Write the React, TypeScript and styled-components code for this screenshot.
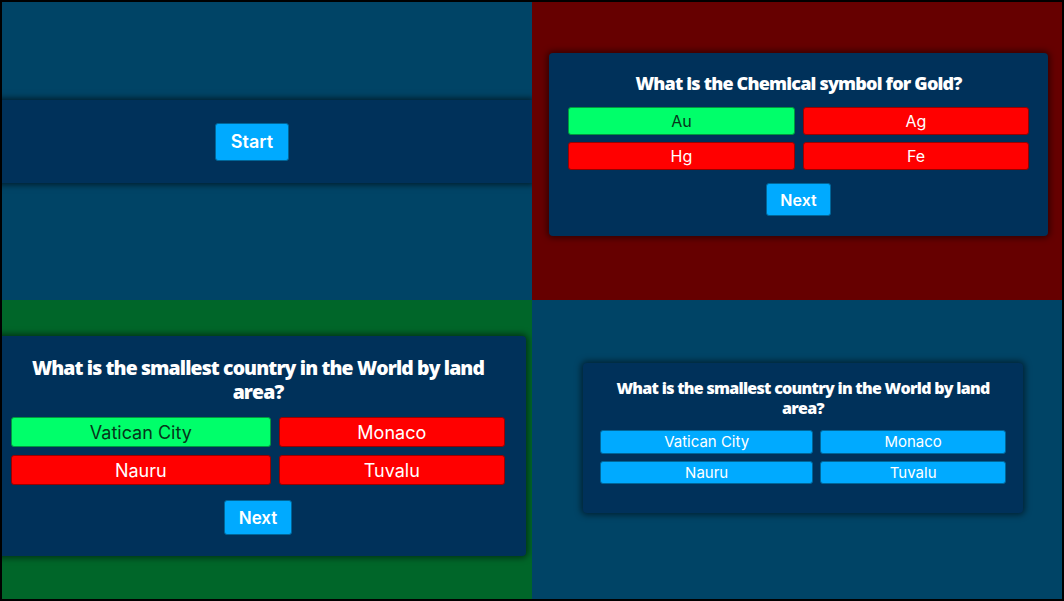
import React from "react";
import styled, { createGlobalStyle } from "styled-components";

const Global = createGlobalStyle`
  html, body { margin: 0; padding: 0; background: #000; }
  *, *::before, *::after { box-sizing: border-box; }
`;

type Hue = "neutral" | "correct" | "wrong";
const PAGE_BG: Record<Hue, string> = {
  neutral: "#004466",
  correct: "#006629",
  wrong: "#660000",
};

const Frame = styled.main`
  width: 1064px;
  height: 601px;
  border: 2px solid #000;
  display: grid;
  grid-template-columns: 530px 530px;
  grid-template-rows: 298px 299px;
  background: #000;
`;

const Panel = styled.section<{ $hue: Hue; $top: number }>`
  background: ${(p) => PAGE_BG[p.$hue]};
  overflow: hidden;
  display: flex;
  align-items: flex-start;
  padding-top: ${(p) => p.$top}px;
`;

const StartBar = styled.div`
  flex: none;
  width: 560px;
  margin-left: -30px;
  height: 83px;
  background: #00315a;
  box-shadow: 0 0 6px 2px rgba(0, 0, 0, 0.55);
  display: flex;
  align-items: center;
  justify-content: center;
`;

type Metrics = {
  width: number;
  offset: number;
  pad: string;
  titleSize: number;
  titleLine: number;
  titleGap: number;
  btnFont: number;
  btnHeight: number;
  rowGap: number;
  colGap: number;
  nextGap: number;
};

const Card = styled.div<{ $m: Metrics }>`
  flex: none;
  width: ${(p) => p.$m.width}px;
  margin-left: ${(p) => p.$m.offset}px;
  padding: ${(p) => p.$m.pad};
  background: #00315a;
  border-radius: 4px;
  box-shadow: 0 0 6px 2px rgba(0, 0, 0, 0.5);
  display: flex;
  flex-direction: column;
  align-items: stretch;
`;

const Question = styled.h2<{ $m: Metrics }>`
  margin: 0 0 ${(p) => p.$m.titleGap}px;
  font-family: "Open Sans", "Noto Sans", sans-serif;
  font-weight: 800;
  font-size: ${(p) => p.$m.titleSize}px;
  line-height: ${(p) => p.$m.titleLine}px;
  letter-spacing: -0.045em;
  color: #fff;
  text-align: center;
`;

const AnswerGrid = styled.div<{ $m: Metrics }>`
  display: grid;
  grid-template-columns: repeat(2, auto);
  row-gap: ${(p) => p.$m.rowGap}px;
  column-gap: ${(p) => p.$m.colGap}px;
`;

type State = "idle" | "correct" | "wrong";
const BTN: Record<State, { bg: string; border: string; color: string }> = {
  idle: { bg: "#00aaff", border: "#006699", color: "#ffffff" },
  correct: { bg: "#00ff6a", border: "#00993f", color: "#06361a" },
  wrong: { bg: "#ff0000", border: "#990000", color: "#ffffff" },
};

const Answer = styled.button<{ $state: State; $m: Metrics }>`
  height: ${(p) => p.$m.btnHeight}px;
  padding: 0 10px;
  border: 1px solid ${(p) => BTN[p.$state].border};
  border-radius: 3px;
  background: ${(p) => BTN[p.$state].bg};
  color: ${(p) => BTN[p.$state].color};
  font-family: Inter, "Noto Sans", sans-serif;
  font-weight: 400;
  font-size: ${(p) => p.$m.btnFont}px;
  display: flex;
  align-items: center;
  justify-content: center;
  white-space: nowrap;
`;

const ActionButton = styled.button<{ $size: number; $h: number; $px: number; $gap?: number }>`
  align-self: center;
  margin-top: ${(p) => p.$gap ?? 0}px;
  height: ${(p) => p.$h}px;
  padding: 0 ${(p) => p.$px}px;
  background: #00aaff;
  border: 1px solid #006699;
  border-radius: 3px;
  color: #fff;
  font-family: Inter, "Noto Sans", sans-serif;
  font-weight: 600;
  font-size: ${(p) => p.$size}px;
  display: flex;
  align-items: center;
  justify-content: center;
`;

type AnswerDef = { text: string; state: State };

function QuizCard({
  m,
  question,
  answers,
  next,
}: {
  m: Metrics;
  question: React.ReactNode;
  answers: AnswerDef[];
  next?: { size: number; h: number; px: number };
}) {
  return (
    <Card $m={m}>
      <Question $m={m}>{question}</Question>
      <AnswerGrid $m={m}>
        {answers.map((a) => (
          <Answer key={a.text} $state={a.state} $m={m}>
            {a.text}
          </Answer>
        ))}
      </AnswerGrid>
      {next && (
        <ActionButton $size={next.size} $h={next.h} $px={next.px} $gap={m.nextGap}>
          Next
        </ActionButton>
      )}
    </Card>
  );
}

const goldMetrics: Metrics = {
  width: 499,
  offset: 17,
  pad: "19px 19px 20px",
  titleSize: 18,
  titleLine: 22,
  titleGap: 13,
  btnFont: 16,
  btnHeight: 28,
  rowGap: 7,
  colGap: 8,
  nextGap: 13,
};

const bigMetrics: Metrics = {
  width: 536,
  offset: -12,
  pad: "20px 21px 21px",
  titleSize: 19.4,
  titleLine: 24,
  titleGap: 13,
  btnFont: 18,
  btnHeight: 30,
  rowGap: 8,
  colGap: 8,
  nextGap: 15,
};

const smallMetrics: Metrics = {
  width: 440,
  offset: 51,
  pad: "16px 17px 29px",
  titleSize: 16,
  titleLine: 19.5,
  titleGap: 12,
  btnFont: 15,
  btnHeight: 23.5,
  rowGap: 7,
  colGap: 7,
  nextGap: 0,
};

const countryQ = "What is the smallest country in the World by land area?";

export default function App() {
  return (
    <>
      <Global />
      <Frame>
        <Panel $hue="neutral" $top={98}>
          <StartBar>
            <ActionButton $size={18} $h={38} $px={15}>
              Start
            </ActionButton>
          </StartBar>
        </Panel>

        <Panel $hue="wrong" $top={51}>
          <QuizCard
            m={goldMetrics}
            question="What is the Chemical symbol for Gold?"
            answers={[
              { text: "Au", state: "correct" },
              { text: "Ag", state: "wrong" },
              { text: "Hg", state: "wrong" },
              { text: "Fe", state: "wrong" },
            ]}
            next={{ size: 16, h: 33, px: 13 }}
          />
        </Panel>

        <Panel $hue="correct" $top={36}>
          <QuizCard
            m={bigMetrics}
            question={countryQ}
            answers={[
              { text: "Vatican City", state: "correct" },
              { text: "Monaco", state: "wrong" },
              { text: "Nauru", state: "wrong" },
              { text: "Tuvalu", state: "wrong" },
            ]}
            next={{ size: 17, h: 35, px: 14 }}
          />
        </Panel>

        <Panel $hue="neutral" $top={63}>
          <QuizCard
            m={smallMetrics}
            question={countryQ}
            answers={[
              { text: "Vatican City", state: "idle" },
              { text: "Monaco", state: "idle" },
              { text: "Nauru", state: "idle" },
              { text: "Tuvalu", state: "idle" },
            ]}
          />
        </Panel>
      </Frame>
    </>
  );
}
